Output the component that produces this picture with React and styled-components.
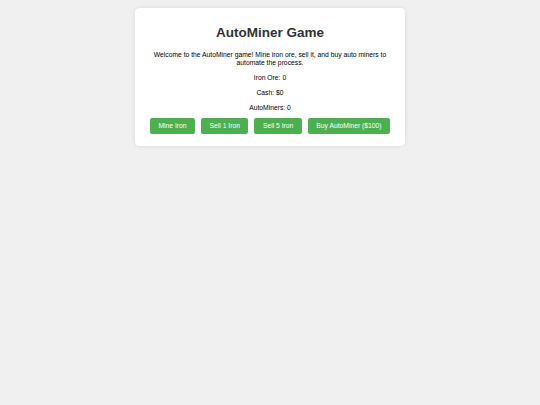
import React, { useState } from "react";
import styled, { createGlobalStyle } from "styled-components";

const Global = createGlobalStyle`
  html, body {
    margin: 0;
    padding: 0;
    background: #f0f0f0;
  }
  body {
    font-family: "Liberation Sans", Arial, sans-serif;
    font-size: 6.75px;
    padding: 8.44px;
    color: #000;
  }
`;

const Card = styled.div`
  max-width: 253.125px;
  margin: 0 auto;
  background: #fff;
  padding: 8.44px 8.44px 10px;
  border-radius: 4.22px;
  box-shadow: 0 0 4.22px rgba(0, 0, 0, 0.1);
  text-align: center;
`;

const Title = styled.h1`
  font-size: 13.5px;
  color: #333;
  margin: 8.6px 0 11px;
`;

const Text = styled.p`
  margin: 7px 0;
  line-height: 8px;
`;

const Actions = styled.div`
  margin-top: -3.5px;
`;

const Button = styled.button`
  font-family: inherit;
  font-size: 6.75px;
  background: #4caf50;
  color: #fff;
  border: none;
  border-radius: 2.11px;
  padding: 4.4px 8.44px;
  margin: 2.11px;
  cursor: pointer;
`;

export default function App() {
  const [ore, setOre] = useState(0);
  const [cash, setCash] = useState(0);
  const [miners, setMiners] = useState(0);

  return (
    <>
      <Global />
      <Card>
        <Title>AutoMiner Game</Title>
        <Text>
          Welcome to the AutoMiner game! Mine iron ore, sell it, and buy auto
          miners to automate the process.
        </Text>
        <Text>Iron Ore: {ore}</Text>
        <Text>Cash: ${cash}</Text>
        <Text>AutoMiners: {miners}</Text>
        <Actions>
          <Button onClick={() => setOre(ore + 1)}>Mine Iron</Button>{" "}
          <Button
            onClick={() => {
              if (ore >= 1) {
                setOre(ore - 1);
                setCash(cash + 10);
              }
            }}
          >
            Sell 1 Iron
          </Button>{" "}
          <Button
            onClick={() => {
              if (ore >= 5) {
                setOre(ore - 5);
                setCash(cash + 50);
              }
            }}
          >
            Sell 5 Iron
          </Button>{" "}
          <Button
            onClick={() => {
              if (cash >= 100) {
                setCash(cash - 100);
                setMiners(miners + 1);
              }
            }}
          >
            Buy AutoMiner ($100)
          </Button>
        </Actions>
      </Card>
    </>
  );
}
